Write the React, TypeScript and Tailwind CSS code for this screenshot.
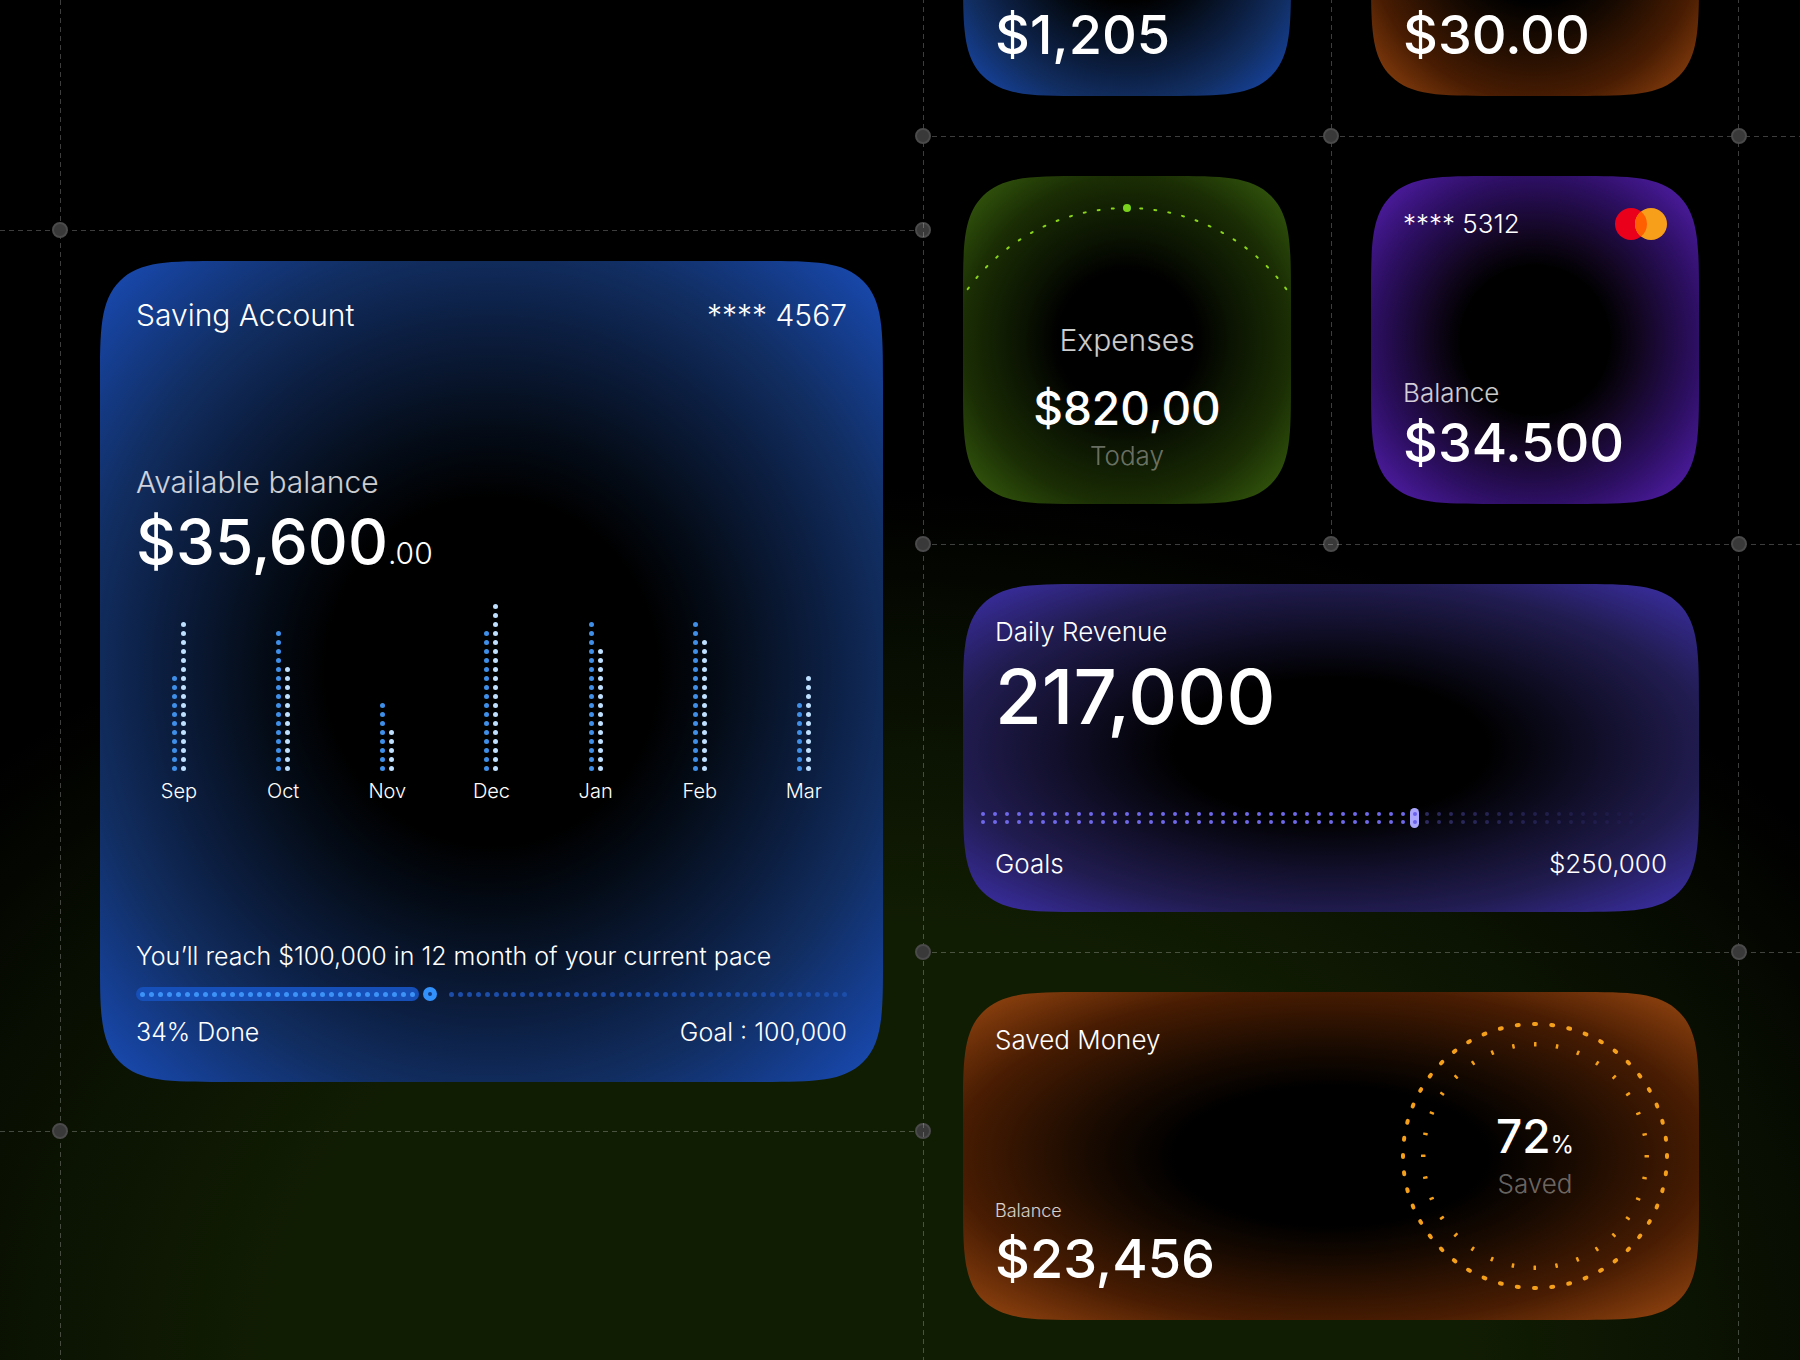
import React from 'react';

interface MonthStat {
  label: string;
  income: number;
  saved: number;
}

const months: MonthStat[] = [
  { label: 'Sep', income: 11, saved: 17 },
  { label: 'Oct', income: 16, saved: 12 },
  { label: 'Nov', income: 8, saved: 5 },
  { label: 'Dec', income: 16, saved: 19 },
  { label: 'Jan', income: 17, saved: 14 },
  { label: 'Feb', income: 17, saved: 15 },
  { label: 'Mar', income: 8, saved: 11 },
];

const themes = {
  blue: 'bg-[radial-gradient(ellipse_farthest-corner_at_center,#000_30%,#050e1c_44%,#0b1c3c_58%,#112d60_73%,#1848ac_96%)]',
  green: 'bg-[radial-gradient(ellipse_farthest-corner_at_center,#000_30%,#0a1202_44%,#1a2d04_70%,#3a620f_98%)]',
  purple: 'bg-[radial-gradient(ellipse_farthest-corner_at_center,#000_32%,#11061f_45%,#2d0f63_70%,#5720b4_98%)]',
  indigo: 'bg-[radial-gradient(ellipse_farthest-corner_at_center,#000_30%,#0c0b1e_46%,#211c50_72%,#3c2fa8_98%)]',
  orange: 'bg-[radial-gradient(ellipse_farthest-corner_at_center,#000_30%,#180a01_46%,#481c02_72%,#964610_98%)]',
};

const lineX =
  'absolute h-px bg-[repeating-linear-gradient(90deg,rgba(255,255,255,0.24)_0_5px,transparent_5px_9px)]';
const lineY =
  'absolute w-px bg-[repeating-linear-gradient(180deg,rgba(255,255,255,0.24)_0_5px,transparent_5px_9px)]';

const range = (n: number) => Array.from({ length: n }, (_, i) => i);

const Node: React.FC<{ className: string }> = ({ className }) => (
  <span className={`absolute size-4 rounded-full border-2 border-[#4a4a4a] bg-[#393939] ${className}`} />
);

const Card: React.FC<{
  theme: keyof typeof themes;
  className?: string;
  children: React.ReactNode;
}> = ({ theme, className = '', children }) => (
  <article
    className={`relative flex flex-1 flex-col overflow-hidden rounded-[125px] font-[350] [corner-shape:squircle] ${themes[theme]} ${className}`}
  >
    {children}
  </article>
);

const Amount: React.FC<{ children: React.ReactNode }> = ({ children }) => (
  <p className="text-[54px] leading-[56px] font-medium">{children}</p>
);

const DotColumn: React.FC<{ count: number; color: string }> = ({ count, color }) => (
  <div className="flex flex-col gap-1">
    {range(count).map((i) => (
      <span key={i} className={`size-[5px] rounded-full ${color}`} />
    ))}
  </div>
);

const SavingAccount: React.FC = () => (
  <Card theme="blue" className="min-h-[821px] px-9 pt-[38px] pb-[34px]">
    <header className="flex justify-between text-[30px] leading-8">
      <h2>Saving Account</h2>
      <span>**** 4567</span>
    </header>

    <div className="mt-[135px]">
      <p className="text-[30px] leading-8 text-white/80">Available balance</p>
      <p className="mt-3 text-[62px] leading-[64px] font-medium">
        $35,600<span className="text-[30px] leading-none font-light">.00</span>
      </p>
    </div>

    {/* monthly chart */}
    <div className="mt-[30px] flex justify-between">
      {months.map((m) => (
        <div key={m.label} className="flex w-[86px] flex-col items-center">
          <div className="flex h-[167px] items-end gap-1">
            <DotColumn count={m.income} color="bg-[#3f8fe8]" />
            <DotColumn count={m.saved} color="bg-[#bfe0ff]" />
          </div>
          <span className="mt-[10px] text-[20px] leading-5">{m.label}</span>
        </div>
      ))}
    </div>

    {/* goal progress */}
    <div className="mt-auto">
      <p className="text-[25px] leading-8">You’ll reach $100,000 in 12 month of your current pace</p>
      <div className="my-[15px] flex items-center gap-1">
        <div className="flex h-[14px] items-center gap-1 rounded-full bg-[#174fb8] px-1">
          {range(31).map((i) => (
            <span key={i} className="size-[5px] rounded-full bg-[#3d92f7]" />
          ))}
        </div>
        <span className="size-[14px] rounded-full border-[5px] border-[#3391fb] bg-[#123b85]" />
        <div className="ml-2 flex flex-1 justify-between">
          {range(45).map((i) => (
            <span key={i} className="size-[5px] rounded-full bg-[#1c4da8]" />
          ))}
        </div>
      </div>
      <div className="flex justify-between text-[25px] leading-8">
        <span>34% Done</span>
        <span>Goal : 100,000</span>
      </div>
    </div>
  </Card>
);

const Expenses: React.FC = () => (
  <Card theme="green" className="items-center justify-end pb-8 text-center">
    <svg viewBox="0 0 328 328" className="absolute inset-0 size-full" aria-hidden="true">
      {range(27).map((i) => (
        <rect
          key={i}
          x={162}
          y={31}
          width={4}
          height={2}
          rx={1}
          fill="#8ad41c"
          transform={`rotate(${(i - 13) * 4.13} 164 229)`}
        />
      ))}
      <circle cx={164} cy={32} r={4} fill="#7bd21c" />
    </svg>
    <h2 className="text-[30px] leading-8 text-white/80">Expenses</h2>
    <p className="mt-7 text-[46px] leading-[48px] font-medium">$820,00</p>
    <p className="mt-2 text-[26px] leading-8 text-white/40">Today</p>
  </Card>
);

const CreditCard: React.FC = () => (
  <Card theme="purple" className="px-8 pt-8 pb-[33px]">
    <header className="flex items-center justify-between text-[26px] leading-8">
      <span>**** 5312</span>
      <svg viewBox="0 0 52 32" className="h-8 w-[52px]" role="img" aria-label="Mastercard">
        <circle cx={16} cy={16} r={16} fill="#eb001b" />
        <circle cx={36} cy={16} r={16} fill="#f79e1b" />
        <path d="M26 3.51a16 16 0 0 1 0 24.98a16 16 0 0 1 0-24.98Z" fill="#ff5f00" />
      </svg>
    </header>
    <p className="mt-auto mb-[6px] text-[26px] leading-8 text-white/80">Balance</p>
    <Amount>$34.500</Amount>
  </Card>
);

const DailyRevenue: React.FC = () => (
  <Card theme="indigo" className="py-8">
    <h2 className="px-8 text-[26px] leading-8">Daily Revenue</h2>
    <p className="mt-3 px-8 text-[76px] leading-[72px] font-medium">217,000</p>
    <div className="mt-auto mb-5 flex h-5 items-center gap-[7px] overflow-hidden px-[17px]">
      {range(58).map((i) =>
        i === 36 ? (
          <div key={i} className="-mx-[2px] flex h-5 w-[9px] shrink-0 flex-col items-center justify-center gap-1 rounded-full bg-[#aaa6fd]">
            <span className="size-1 rounded-full bg-[#6a62ee]" />
            <span className="size-1 rounded-full bg-[#6a62ee]" />
          </div>
        ) : (
          <div
            key={i}
            className="flex w-[5px] shrink-0 flex-col items-center gap-1"
            style={{ opacity: i < 36 ? 1 : Math.max(0, 0.4 - (i - 36) * 0.02) }}
          >
            <span className="size-1 rounded-full bg-[#6f68ea]" />
            <span className="size-1 rounded-full bg-[#6f68ea]" />
          </div>
        ),
      )}
    </div>
    <div className="flex justify-between px-8 text-[26px] leading-8">
      <span>Goals</span>
      <span>$250,000</span>
    </div>
  </Card>
);

const SavedMoney: React.FC = () => (
  <Card theme="orange" className="flex-row justify-between pl-8 pr-[28px]">
    <div className="flex flex-col pt-8 pb-[33px]">
      <h2 className="text-[26px] leading-8">Saved Money</h2>
      <p className="mt-auto mb-2 text-[18px] leading-6 text-white/80">Balance</p>
      <Amount>$23,456</Amount>
    </div>
    <div className="relative flex size-[272px] flex-col items-center justify-center self-center">
      <svg viewBox="0 0 272 272" className="absolute inset-0 size-full" fill="#f5a01d" aria-hidden="true">
        {range(48).map((i) => (
          <rect key={i} x={133} y={2} width={6} height={4} rx={2} transform={`rotate(${i * 7.5} 136 136)`} />
        ))}
        {range(32).map((i) => (
          <rect key={i} x={135} y={22} width={2.5} height={4.5} rx={0.5} transform={`rotate(${i * 11.25} 136 136)`} />
        ))}
      </svg>
      <p className="text-[46px] leading-[48px] font-medium">
        72<span className="text-[24px] leading-none font-normal">%</span>
      </p>
      <p className="mt-2 text-[26px] leading-8 text-white/40">Saved</p>
    </div>
  </Card>
);

const App: React.FC = () => {
  return (
    <main className="grid min-h-screen grid-cols-[923fr_877fr] overflow-hidden bg-black bg-[radial-gradient(ellipse_66%_64%_at_48%_100%,#111d03_0%,#111d03_50%,#080e02_80%,#000_100%)] font-['Inter','Liberation_Sans',sans-serif] text-white">
      <section className="relative pt-[230px]">
        <span className={`${lineY} inset-y-0 left-[60px]`} />
        <div className="relative pl-[60px]">
          <span className={`${lineX} inset-x-0 top-0`} />
          <span className={`${lineX} inset-x-0 -bottom-px`} />
          <Node className="-top-2 left-[52px]" />
          <Node className="-top-2 -right-2" />
          <Node className="-bottom-2 left-[52px]" />
          <Node className="-right-2 -bottom-2" />
          <div className="flex px-10 pt-[31px] pb-[49px]">
            <SavingAccount />
          </div>
        </div>
      </section>

      <section className="relative -mt-[272px] pr-[61px]">
        <span className={`${lineY} inset-y-0 left-0`} />
        <span className={`${lineY} inset-y-0 right-[61px]`} />

        <div className="relative grid grid-cols-2">
          <span className={`${lineY} inset-y-0 left-1/2`} />
          <div className="flex h-[408px] p-10">
            <Card theme="blue" className="justify-end px-8 pb-[33px]">
              <Amount>$1,205</Amount>
            </Card>
          </div>
          <div className="flex h-[408px] p-10">
            <Card theme="orange" className="justify-end px-8 pb-[33px]">
              <Amount>$30.00</Amount>
            </Card>
          </div>
          <div className="relative flex h-[408px] p-10">
            <span className={`${lineX} inset-x-0 top-0`} />
            <Node className="-top-2 -left-2" />
            <Expenses />
          </div>
          <div className="relative flex h-[408px] p-10">
            <span className={`${lineX} top-0 -right-[61px] left-0`} />
            <Node className="-top-2 -left-2" />
            <Node className="-top-2 -right-2" />
            <CreditCard />
          </div>
          <Node className="-bottom-2 left-1/2 -ml-2" />
        </div>

        <div className="relative flex h-[408px] p-10">
          <span className={`${lineX} top-0 -right-[61px] left-0`} />
          <Node className="-top-2 -left-2" />
          <Node className="-top-2 -right-2" />
          <DailyRevenue />
        </div>

        <div className="relative flex h-[408px] p-10">
          <span className={`${lineX} top-0 -right-[61px] left-0`} />
          <Node className="-top-2 -left-2" />
          <Node className="-top-2 -right-2" />
          <SavedMoney />
        </div>
      </section>
    </main>
  );
};

export default App;
